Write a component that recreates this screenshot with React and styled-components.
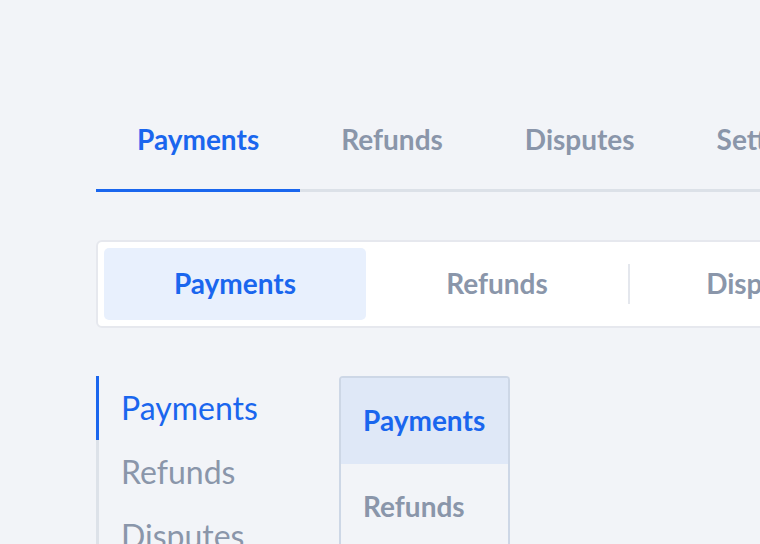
import React from "react";
import styled, { createGlobalStyle } from "styled-components";

const Global = createGlobalStyle`
  html, body { margin: 0; padding: 0; background: #f2f4f8; overflow: hidden; }
  body { font-family: Lato, "Noto Sans", sans-serif; }
  * { box-sizing: border-box; }
`;

const BLUE = "#1a66ee";
const GRAY = "#8a96aa";

const Page = styled.div`
  padding: 122px 0 0 96px;
  width: 1400px;
  display: flex;
  flex-direction: column;
  gap: 48px;
`;

const TabBar = styled.div`
  display: flex;
  border-bottom: 3px solid #dce1e8;
  width: max-content;
  min-width: 900px;
`;

const Tab = styled.div`
  padding: 0 41px 33px;
  font-size: 28px;
  font-weight: 700;
  line-height: 34px;
  color: ${(p) => (p.$active ? BLUE : GRAY)};
  border-bottom: 3px solid ${(p) => (p.$active ? BLUE : "transparent")};
  margin-bottom: -3px;
  white-space: nowrap;
`;

const Segmented = styled.div`
  display: flex;
  align-items: center;
  width: max-content;
  padding: 6px;
  background: #ffffff;
  border: 2px solid #e6e8ee;
  border-radius: 6px;
`;

const Segment = styled.div`
  width: 262px;
  height: 72px;
  padding-bottom: 2px;
  display: flex;
  align-items: center;
  justify-content: center;
  font-size: 28px;
  font-weight: 700;
  border-radius: 5px;
  color: ${(p) => (p.$active ? BLUE : GRAY)};
  background: ${(p) => (p.$active ? "#e8f0fd" : "transparent")};
  white-space: nowrap;
`;

const SegDivider = styled.div`
  width: 2px;
  height: 40px;
  background: #e4e7ed;
  flex: none;
`;

const Columns = styled.div`
  display: flex;
  align-items: flex-start;
  gap: 40px;
`;

const VList = styled.div`
  width: 203px;
  display: flex;
  flex-direction: column;
  border-left: 3px solid #dde2e9;
`;

const VItem = styled.div`
  height: 64px;
  line-height: 64px;
  padding-left: 22px;
  font-size: 32px;
  font-weight: 400;
  color: ${(p) => (p.$active ? BLUE : GRAY)};
  margin-left: -3px;
  border-left: 3px solid ${(p) => (p.$active ? BLUE : "transparent")};
  white-space: nowrap;
`;

const BoxList = styled.div`
  display: inline-flex;
  flex-direction: column;
  border: 2px solid #cdd7e6;
  border-radius: 4px;
  overflow: hidden;
  background: #f2f4f8;
`;

const BoxItem = styled.div`
  height: 86px;
  display: flex;
  align-items: center;
  padding: 0 23px 2px 22px;
  font-size: 28px;
  font-weight: 700;
  color: ${(p) => (p.$active ? BLUE : GRAY)};
  background: ${(p) => (p.$active ? "#dfe8f7" : "transparent")};
  white-space: nowrap;
`;

const tabs = ["Payments", "Refunds", "Disputes", "Settings"];

export default function App() {
  return (
    <>
      <Global />
      <Page>
        <TabBar>
          {tabs.map((t, i) => (
            <Tab key={t} $active={i === 0}>
              {t}
            </Tab>
          ))}
        </TabBar>
        <Segmented>
          <Segment $active>Payments</Segment>
          <Segment>Refunds</Segment>
          <SegDivider />
          <Segment>Disputes</Segment>
          <SegDivider />
          <Segment>Settings</Segment>
        </Segmented>
        <Columns>
          <VList>
            <VItem $active>Payments</VItem>
            <VItem>Refunds</VItem>
            <VItem>Disputes</VItem>
            <VItem>Settings</VItem>
          </VList>
          <BoxList>
            <BoxItem $active>Payments</BoxItem>
            <BoxItem>Refunds</BoxItem>
            <BoxItem>Disputes</BoxItem>
          </BoxList>
        </Columns>
      </Page>
    </>
  );
}
